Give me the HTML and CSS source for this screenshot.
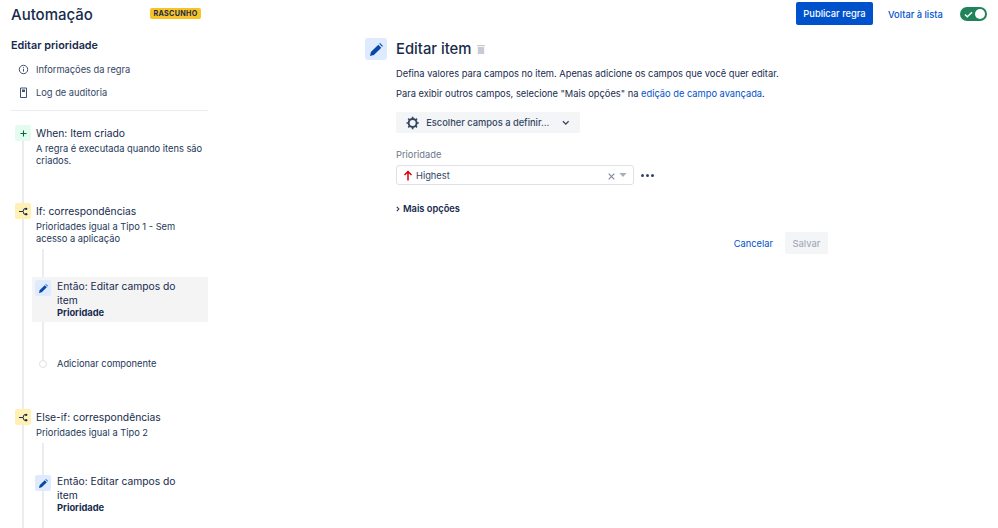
FILE: index.html
```html
<!DOCTYPE html>
<html lang="pt">
<head>
    <meta charset="UTF-8"/>
    <title>Automação</title>
    <link rel="stylesheet" href="styles.css">
</head>
<body>
<header class="topbar">
    <div class="topbar-left">
        <h1 class="page-title">Automação</h1>
        <span class="badge">RASCUNHO</span>
    </div>
    <div class="topbar-right">
        <button class="btn-primary">Publicar regra</button>
        <a class="link back-link" href="#">Voltar à lista</a>
        <span class="toggle">
            <svg width="9" height="7" viewBox="0 0 10 8"><path d="M1 4l2.600 2.600L9 1.400" fill="none" stroke="#fff" stroke-width="1.600"/></svg>
            <span class="toggle-knob"></span>
        </span>
    </div>
</header>

<div class="layout">
    <aside class="sidebar">
        <h2 class="rule-name">Editar prioridade</h2>
        <ul class="side-nav">
            <li>
                <svg width="11" height="11" viewBox="0 0 11 11"><circle cx="5.500" cy="5.500" r="4.200" fill="none" stroke="#42526e" stroke-width="1"/><path d="M5.500 5v2.600M5.500 3.200v1" stroke="#42526e" stroke-width="1"/></svg>
                Informações da regra
            </li>
            <li>
                <svg width="11" height="11" viewBox="0 0 11 11"><path d="M2.500 1h6v9.500h-6z" fill="none" stroke="#42526e" stroke-width="1"/><path d="M4 2.500h3v2.500h-3z" fill="#42526e"/></svg>
                Log de auditoria
            </li>
        </ul>
        <div class="timeline">
            <div class="step step-when">
                <span class="step-icon icon-green">
                    <svg width="7" height="7" viewBox="0 0 8 8"><path d="M4 .5v7M.5 4h7" stroke="#006644" stroke-width="1.200"/></svg>
                </span>
                <div class="step-text">
                    <div class="step-title">When: Item criado</div>
                    <div class="step-desc">A regra é executada quando itens são criados.</div>
                </div>
            </div>
            <div class="step step-if">
                <span class="step-icon icon-yellow">
                    <svg width="9" height="9" viewBox="0 0 10 10"><path d="M0 5h4.500M7.500 2H5.600L4.500 5l1.100 3h1.900" fill="none" stroke="#172b4d" stroke-width="1.100"/><circle cx="8" cy="2" r="1.300" fill="#172b4d"/><circle cx="8" cy="8" r="1.300" fill="#172b4d"/></svg>
                </span>
                <div class="step-text">
                    <div class="step-title">If: correspondências</div>
                    <div class="step-desc">Prioridades igual a Tipo 1 - Sem acesso a aplicação</div>
                </div>
            </div>
            <div class="branch branch-first">
                <div class="action action-selected">
                    <span class="step-icon icon-blue">
                        <svg width="9" height="9" viewBox="0 0 10 10"><path d="M0 10l.7-3L6.400 1.300l2.300 2.300L3 9.300zM7.100.6l.6-.6 2.300 2.300-.6.6z" fill="#0747a6"/></svg>
                    </span>
                    <div class="action-text">
                        <div class="action-title">Então: Editar campos do item</div>
                        <div class="step-strong">Prioridade</div>
                    </div>
                </div>
                <div class="add-component">
                    <span class="add-dot"></span>
                    Adicionar componente
                </div>
            </div>
            <div class="step step-elseif">
                <span class="step-icon icon-yellow">
                    <svg width="9" height="9" viewBox="0 0 10 10"><path d="M0 5h4.500M7.500 2H5.600L4.500 5l1.100 3h1.900" fill="none" stroke="#172b4d" stroke-width="1.100"/><circle cx="8" cy="2" r="1.300" fill="#172b4d"/><circle cx="8" cy="8" r="1.300" fill="#172b4d"/></svg>
                </span>
                <div class="step-text">
                    <div class="step-title">Else-if: correspondências</div>
                    <div class="step-desc">Prioridades igual a Tipo 2</div>
                </div>
            </div>
            <div class="branch branch-second">
                <div class="action">
                    <span class="step-icon icon-blue">
                        <svg width="9" height="9" viewBox="0 0 10 10"><path d="M0 10l.7-3L6.400 1.300l2.300 2.300L3 9.300zM7.100.6l.6-.6 2.300 2.300-.6.6z" fill="#0747a6"/></svg>
                    </span>
                    <div class="action-text">
                        <div class="action-title">Então: Editar campos do item</div>
                        <div class="step-strong">Prioridade</div>
                    </div>
                </div>
            </div>
        </div>
    </aside>

    <main class="editor">
        <span class="editor-icon">
            <svg width="13" height="13" viewBox="0 0 10 10"><path d="M0 10l.7-3L6.400 1.300l2.300 2.300L3 9.300zM7.100.6l.6-.6 2.300 2.300-.6.6z" fill="#0747a6"/></svg>
        </span>
        <div class="editor-body">
            <div class="editor-head">
                <h2 class="editor-title">Editar item</h2>
                <svg width="8" height="10" viewBox="0 0 8 10"><path d="M0 1h8v1.200H0zM.8 3h6.400v7H.8z" fill="#c8ccd2"/></svg>
            </div>
            <p class="help">Defina valores para campos no item. Apenas adicione os campos que você quer editar.</p>
            <p class="help">Para exibir outros campos, selecione "Mais opções" na <a class="link" href="#">edição de campo avançada</a>.</p>
            <button class="btn-fields">
                <svg width="14" height="14" viewBox="0 0 14 14"><circle cx="7" cy="7" r="4.200" fill="none" stroke="#344563" stroke-width="2"/><path d="M7 .5v2.400M7 11.100v2.400M.5 7h2.400M11.100 7h2.400M2.400 2.400l1.700 1.700M9.900 9.900l1.700 1.700M2.400 11.600l1.700-1.700M9.900 4.100l1.700-1.700" stroke="#344563" stroke-width="1.800"/></svg>
                <span>Escolher campos a definir...</span>
                <svg class="chev" width="8" height="6" viewBox="0 0 8 6"><path d="M1 1.200l3 3 3-3" fill="none" stroke="#344563" stroke-width="1.400"/></svg>
            </button>
            <label class="field-label">Prioridade</label>
            <div class="field-row">
                <div class="select">
                    <svg width="10" height="11" viewBox="0 0 10 11"><path d="M5 10.500V2M1.500 5L5 1.500 8.500 5" fill="none" stroke="#d8000c" stroke-width="1.500"/></svg>
                    <span class="select-value">Highest</span>
                    <svg class="select-clear" width="7" height="7" viewBox="0 0 7 7"><path d="M.7.7l5.600 5.600M6.300.7L.7 6.300" stroke="#7a869a" stroke-width="1.100"/></svg>
                    <svg class="select-caret" width="8" height="4" viewBox="0 0 8 4"><path d="M.5 0h7L4 4z" fill="#a5adba"/></svg>
                </div>
                <span class="more-dots"><i></i><i></i><i></i></span>
            </div>
            <div class="more-options">
                <svg width="4" height="6" viewBox="0 0 5 7"><path d="M1 .8l2.600 2.700L1 6.200" fill="none" stroke="#172b4d" stroke-width="1.300"/></svg>
                Mais opções
            </div>
            <div class="form-actions">
                <a class="link" href="#">Cancelar</a>
                <button class="btn-disabled" disabled>Salvar</button>
            </div>
        </div>
    </main>
</div>
</body>
</html>
```

FILE: styles.css
```css
html, body {
    height: 528px;
    overflow: hidden;
}

body {
    margin: 0;
    padding: 0;
    font-family: Inter, "Liberation Sans", sans-serif;
    font-size: 9.300px;
    color: #172b4d;
    background-color: #fff;
}

button {
    font-family: inherit;
    border: 0;
}

.link {
    color: #0052cc;
    text-decoration: none;
}

.topbar {
    height: 28px;
    padding: 0 11px;
    display: flex;
    align-items: center;
    justify-content: space-between;
}

.topbar-left {
    display: flex;
    align-items: center;
    gap: 20px;
}

.page-title {
    margin: 0;
    width: 119px;
    font-size: 15px;
    font-weight: 500;
    color: #172b4d;
}

.badge {
    box-sizing: border-box;
    width: 51px;
    height: 11px;
    margin-top: -1px;
    background-color: #f7c325;
    color: #172b4d;
    font-size: 7.200px;
    font-weight: 700;
    line-height: 11px;
    letter-spacing: 0.3px;
    text-align: center;
    border-radius: 2px;
}

.topbar-right {
    display: flex;
    align-items: center;
}

.btn-primary {
    width: 77px;
    height: 23px;
    margin-top: -2px;
    padding: 0;
    background-color: #0052cc;
    color: #fff;
    font-size: 9.300px;
    font-weight: 500;
    border-radius: 2px;
}

.back-link {
    margin-left: 15px;
    width: 54px;
    white-space: nowrap;
    font-weight: 500;
}

.toggle {
    box-sizing: border-box;
    width: 27px;
    height: 14px;
    margin-left: 18px;
    padding: 0 2px 0 4px;
    border-radius: 7px;
    background-color: #1f845a;
    display: flex;
    align-items: center;
    justify-content: space-between;
}

.toggle-knob {
    width: 10px;
    height: 10px;
    border-radius: 50%;
    background-color: #fff;
}

.layout {
    height: 500px;
    display: flex;
}

.sidebar {
    width: 197px;
    margin-left: 11px;
    flex-shrink: 0;
    display: flex;
    flex-direction: column;
}

.rule-name {
    margin: 11px 0 0;
    font-size: 10.800px;
    font-weight: 600;
    line-height: 14px;
}

.side-nav {
    list-style: none;
    margin: 5px 0 0;
    padding: 0 0 6px 7px;
    border-bottom: 1px solid #ebecf0;
    color: #344563;
}

.side-nav li {
    height: 23px;
    display: flex;
    align-items: center;
    gap: 7px;
}

.timeline {
    position: relative;
    flex: 1;
    padding-top: 14px;
    display: flex;
    flex-direction: column;
}

.timeline::before {
    content: "";
    position: absolute;
    left: 11px;
    top: 30px;
    bottom: 0;
    width: 2px;
    background-color: #ebecf0;
}

.step {
    position: relative;
    margin-left: 4px;
    display: flex;
    align-items: flex-start;
    gap: 5px;
}

.step-icon {
    width: 16px;
    height: 16px;
    border-radius: 2px;
    flex-shrink: 0;
    display: flex;
    align-items: center;
    justify-content: center;
}

.icon-green {
    background-color: #e3fcef;
}

.icon-yellow {
    background-color: #fff0b3;
}

.icon-blue {
    background-color: #deebff;
}

.step-title {
    margin-top: 1px;
    font-size: 10.300px;
    line-height: 14px;
}

.step-desc {
    margin-top: 3px;
    color: #253858;
    line-height: 12px;
}

.step-if {
    margin-top: 36px;
}

.branch {
    position: relative;
    margin-left: 21px;
}

.branch::before {
    content: "";
    position: absolute;
    left: 10px;
    top: 4px;
    bottom: 6px;
    width: 2px;
    background-color: #ebecf0;
}

.branch-first {
    padding-top: 32px;
}

.action {
    position: relative;
    display: flex;
    align-items: flex-start;
    gap: 6px;
    padding: 3px;
    border-radius: 2px;
}

.action-selected {
    background-color: #f4f4f5;
}

.action-text {
    width: 135px;
}

.action-title {
    margin-top: -1px;
    font-size: 10.300px;
    line-height: 14px;
}

.step-strong {
    font-weight: 700;
    line-height: 12px;
}

.add-component {
    position: relative;
    margin: 36px 0 0 7px;
    display: flex;
    align-items: center;
    gap: 10px;
    color: #253858;
    line-height: 12px;
}

.add-dot {
    box-sizing: border-box;
    width: 8px;
    height: 8px;
    border-radius: 50%;
    background-color: #fff;
    border: 1px solid #dfe1e6;
}

.step-elseif {
    margin-top: 39px;
}

.branch-second {
    flex: 1;
    padding-top: 33px;
}

.branch-second::before {
    bottom: 0;
}

.editor {
    width: 463px;
    margin-left: 157px;
    display: flex;
    align-items: flex-start;
    gap: 9px;
}

.editor-icon {
    width: 22px;
    height: 22px;
    margin-top: 10px;
    flex-shrink: 0;
    border-radius: 3px;
    background-color: #deebff;
    display: flex;
    align-items: center;
    justify-content: center;
}

.editor-body {
    flex: 1;
}

.editor-head {
    height: 22px;
    margin-top: 10px;
    display: flex;
    align-items: center;
    gap: 6px;
}

.editor-title {
    margin: 0;
    font-size: 14.800px;
    font-weight: 500;
}

.help {
    margin: 0;
    line-height: 20px;
    color: #172b4d;
}

.help:first-of-type {
    margin-top: 4px;
}

.btn-fields {
    width: 184px;
    height: 21px;
    margin-top: 8px;
    padding: 0 10px;
    border-radius: 2px;
    background-color: #f4f5f7;
    color: #344563;
    font-size: 9.300px;
    font-weight: 500;
    white-space: nowrap;
    display: flex;
    align-items: center;
    gap: 7px;
}

.chev {
    margin-left: 6px;
}

.field-label {
    display: block;
    margin-top: 15px;
    line-height: 14px;
    color: #6b778c;
}

.field-row {
    margin-top: 3px;
    display: flex;
    align-items: center;
    gap: 7px;
}

.select {
    box-sizing: border-box;
    width: 238px;
    height: 20px;
    padding: 0 6px;
    border: 1px solid #dfe1e6;
    border-radius: 3px;
    display: flex;
    align-items: center;
    gap: 3px;
}

.select-value {
    flex: 1;
    color: #344563;
}

.select-clear {
    margin-top: 3px;
    margin-right: 1px;
}

.more-dots {
    display: flex;
    gap: 2px;
}

.more-dots i {
    width: 3px;
    height: 3px;
    border-radius: 50%;
    background-color: #344563;
}

.more-options {
    margin-top: 17px;
    display: flex;
    align-items: center;
    gap: 3px;
    line-height: 14px;
    font-weight: 600;
}

.form-actions {
    width: 432px;
    margin-top: 16px;
    display: flex;
    justify-content: flex-end;
    align-items: center;
    gap: 12px;
}

.btn-disabled {
    width: 43px;
    height: 22px;
    padding: 0;
    border-radius: 2px;
    background-color: #f4f5f7;
    color: #a5adba;
    font-size: 9.300px;
    font-weight: 500;
}
```
